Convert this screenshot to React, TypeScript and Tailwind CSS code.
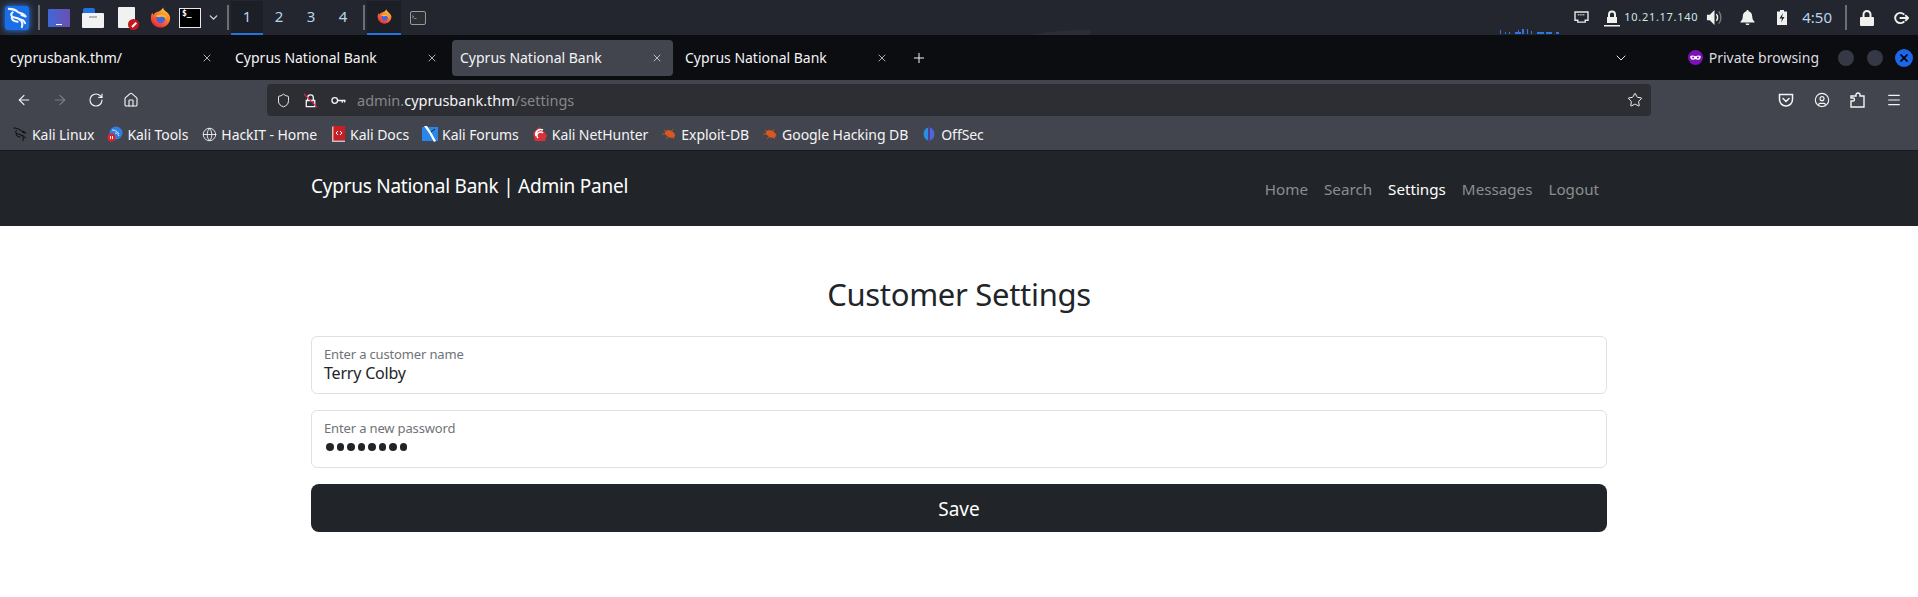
import React from 'react';
import { ArrowLeft, ArrowRight, RotateCw, Home, Shield, Star, X, Plus, ChevronDown, Menu, CircleUser, Globe } from 'lucide-react';

const font = "font-['Noto_Sans','Open_Sans',sans-serif]";

const KaliDragon = ({ className, color, weight = 1.5 }: { className?: string; color: string; weight?: number }) => (
  <svg viewBox="0 0 24 24" className={className} fill="none" stroke={color} strokeWidth={weight} strokeLinecap="round" strokeLinejoin="round">
    <path d="M3 3c4 0 7 1 9 3 2 1.500 4 1.500 6 2.500 1 .5 2 1.500 2.500 2.500-1.500-1-3-1-4.500-1.500" />
    <path d="M7 6.500c-1.500 1-2 2.500-1 4 1.500 2 6 1.500 8.500 3.500 2.500 2 3 5 2 8" />
    <path d="M6 12c0 3 3 4 6 4.500" />
    <path d="M14 14c2.500 0 5 1.500 6 4" />
  </svg>
);

const Firefox = ({ size }: { size: number }) => (
  <svg viewBox="0 0 24 24" width={size} height={size}>
    <defs>
      <linearGradient id="ffbody" x1="0.8" y1="0" x2="0.2" y2="1">
        <stop offset="0" stopColor="#ffd23a" />
        <stop offset="0.45" stopColor="#ff7a2e" />
        <stop offset="1" stopColor="#e0213f" />
      </linearGradient>
    </defs>
    <path d="M12 23.500C5.700 23.500 1 18.500 1 12.500c0-2.200.6-4.300 1.600-6l1.400 2.500c.8-1.600 2.300-2.800 4-3.300C10.500 5 13.500 3.500 15 .5c.3 2.500 2 3.500 4 5.300 2.300 2 4 4.200 4 6.700 0 6-4.800 11-11 11z" fill="url(#ffbody)" />
    <circle cx="12" cy="13.500" r="5.200" fill="#4463e4" />
    <path d="M6.500 10.500c2.500-2.500 7.500-3 10.500-.5 1.500 1.200 2 3 1.800 4.500-1-2.500-3-3.500-5.300-3.500-2.300.4-4.500 1.300-7-.5z" fill="#ffb52e" />
    <path d="M5 13c.5 4 3.500 7 7.500 7-3-1-5-3.500-5-7z" fill="#f8512f" />
  </svg>
);

const Divider = () => <div className="h-[25px] w-[2px] bg-[#6b6e75]" />;

const Workspace = ({ n, active }: { n: number; active?: boolean }) => (
  <div className={`flex h-[34px] w-[32px] items-center justify-center border-b-[2px] text-[15px] text-[#b8d4ee] ${active ? 'border-[#2473e0] bg-[#1c1f26] text-[#8fc3f2]' : 'border-transparent'}`}>
    {n}
  </div>
);

const TaskbarRight = () => (
  <div className="ml-auto flex items-center text-[#f0f0ee]">
    <svg viewBox="0 0 16 14" className="h-[13px] w-[15px]" fill="none" stroke="#e8e8e6" strokeWidth="1.500">
      <path d="M1 1h14v9h-3v2H4v-2H1z" />
      <path d="M4 4h8" strokeDasharray="1 1" />
    </svg>
    <svg viewBox="0 0 16 18" className="ml-[15px] h-[18px] w-[16px]" fill="#f0f0ee">
      <path d="M4 8V5.500a4 4 0 0 1 8 0V8h1v6H3V8zm2 0h4V5.500a2 2 0 0 0-4 0z" />
      <path d="M0 16h16v1.500H0z" />
    </svg>
    <span className="ml-[4px] text-[11px] tracking-[0.7px] text-[#d0e6e6]">10.21.17.140</span>
    <svg viewBox="0 0 18 18" className="ml-[8px] h-[17px] w-[17px]" fill="none">
      <path d="M1 6h3l5-5v16l-5-5H1z" fill="#f0f0ee" />
      <path d="M11 5.500c1.500 2 1.500 5 0 7" stroke="#f0f0ee" strokeWidth="1.500" />
      <path d="M13.500 2.500c3 3.500 3 9.500 0 13" stroke="#777a80" strokeWidth="1.500" />
    </svg>
    <svg viewBox="0 0 16 16" className="ml-[17px] h-[15px] w-[15px]" fill="#f0f0ee">
      <path d="M8 0c.7 0 1.200.5 1.200 1.200C11.500 1.800 13 3.800 13 6.500c0 3 .7 4.500 2.500 6v.8H.5v-.8C2.300 11 3 9.500 3 6.500 3 3.800 4.500 1.800 6.800 1.200 6.800.5 7.300 0 8 0z" />
      <path d="M6 14.300h4a2 2 0 0 1-4 0z" />
    </svg>
    <svg viewBox="0 0 10 15" className="ml-[22px] h-[15px] w-[10px]">
      <path d="M3 0h4v1.500h3V15H0V1.500h3z" fill="#f0f0ee" />
      <path d="M6 3L2.500 8.500H5L4 12.500 7.500 7H5z" fill="#23262e" />
    </svg>
    <span className="ml-[15px] text-[15px] text-[#b8d4ee]">4:50</span>
    <div className="ml-[13px]"><Divider /></div>
    <svg viewBox="0 0 14 16" className="ml-[13px] h-[16px] w-[14px]" fill="#f0f0ee">
      <path d="M2.500 7V4.500a4.500 4.500 0 0 1 9 0V7H13a1 1 0 0 1 1 1v7a1 1 0 0 1-1 1H1a1 1 0 0 1-1-1V8a1 1 0 0 1 1-1zm2 0h5V4.500a2.500 2.500 0 0 0-5 0z" />
    </svg>
    <svg viewBox="0 0 16 14" className="ml-[20px] h-[14px] w-[15px]" fill="none" stroke="#f0f0ee" strokeWidth="2">
      <path d="M11 3.500A5.500 5.500 0 1 0 11 10.500" />
      <path d="M6 7h9M12 4l3 3-3 3" />
    </svg>
  </div>
);

const Taskbar = () => (
  <div className="relative flex h-[35px] items-center bg-[#23262e] pl-[5px] pr-[9px]">
    <div className="flex h-[24px] w-[24px] items-center justify-center rounded-[3px] bg-[#1a6fe8] shadow-[0_0_6px_#2a80ff]">
      <KaliDragon className="h-[23px] w-[23px]" color="#f2f7ff" weight={2.1} />
    </div>
    <div className="ml-[9px]"><Divider /></div>
    <div className="ml-[8px] flex h-[18px] w-[22px] items-end justify-center rounded-[1px] bg-gradient-to-r from-[#3a68d8] to-[#6a4fb0] pb-[2px]">
      <div className="h-[1px] w-[6px] bg-white" />
    </div>
    <div className="relative ml-[12px] h-[20px] w-[22px]">
      <div className="absolute left-[1px] top-0 h-[7px] w-[12px] rounded-t-[2px] bg-[#2070e0]" />
      <div className="absolute bottom-0 left-0 flex h-[15px] w-[22px] justify-center rounded-[1px] bg-[#f2f2f2] pt-[3px]">
        <div className="h-[2px] w-[8px] bg-[#b5b5b5]" />
      </div>
    </div>
    <div className="relative ml-[14px] h-[21px] w-[17px] rounded-[1px] bg-[#f1f1f1]">
      <div className="absolute -bottom-[2px] -right-[4px] flex h-[11px] w-[11px] items-center justify-center rounded-full bg-[#c8161d]">
        <div className="h-[1.500px] w-[6px] -rotate-45 bg-white" />
      </div>
    </div>
    <div className="ml-[15px]"><Firefox size={21} /></div>
    <div className="ml-[8px] h-[20px] w-[22px] border border-[#e8e8e8] bg-black pl-[2px] font-['DejaVu_Sans_Mono',monospace] text-[8px] leading-[10px] font-bold text-white">$_</div>
    <ChevronDown className="ml-[6px] h-[13px] w-[13px] text-[#d8d8d8]" strokeWidth={2.5} />
    <div className="ml-[7px]"><Divider /></div>
    <div className="ml-[2px] flex">
      <Workspace n={1} active />
      <Workspace n={2} />
      <Workspace n={3} />
      <Workspace n={4} />
    </div>
    <div className="ml-[4px]"><Divider /></div>
    <div className="ml-[2px] flex h-[34px] w-[34px] items-center justify-center border-b-[2px] border-[#2473e0] bg-[#1c1f26]">
      <Firefox size={15} />
    </div>
    <div className="ml-[9px] h-[14px] w-[16px] rounded-[2px] border border-[#9a9a9a] bg-[#2b2e33] pl-[1px] text-[6px] leading-[8px] text-white">›_</div>
    <svg viewBox="0 0 60 5" className="absolute bottom-[1px] left-[1500px] h-[5px] w-[60px]" fill="#2a78e0">
      <path d="M0 1h1v4H0zM5 3h1v2H5zM9 3h1v2H9zM15 3h6v2h-6zM18 1h1v2h-1zM22 0h2v5h-2zM27 0h1v5h-1zM31 2h1v3h-1zM37 3h7v2h-7zM46 3h6v2h-6zM56 3h3v2h-3z" />
    </svg>
    <svg viewBox="0 0 60 5" className="absolute bottom-0 left-[1030px] h-[5px] w-[60px]">
      <path d="M0 5C20 1 40 0 60 0v5z" fill="#2b2e36" />
    </svg>
    <TaskbarRight />
  </div>
);

const Tab = ({ title, active }: { title: string; active?: boolean }) => (
  <div className={`mx-[2px] flex h-[36px] w-[221px] shrink-0 items-center justify-between rounded-[4px] pl-[8px] pr-[10px] text-[14px] text-[#f4f4f6] ${active ? 'bg-[#42454e]' : ''}`}>
    <span>{title}</span>
    <X className="h-[12px] w-[12px] text-[#e4e4e6]" strokeWidth={1.500} />
  </div>
);

const TabBar = () => (
  <div className="flex h-[45px] items-center bg-[#0c0d11] pr-[5px]">
    <Tab title="cyprusbank.thm/" />
    <Tab title="Cyprus National Bank" />
    <Tab title="Cyprus National Bank" active />
    <Tab title="Cyprus National Bank" />
    <Plus className="ml-[11px] h-[16px] w-[16px] text-[#f4f4f6]" strokeWidth={1.500} />
    <ChevronDown className="ml-auto h-[16px] w-[16px] text-[#e4e4e6]" strokeWidth={1.500} />
    <svg viewBox="0 0 16 16" className="ml-[59px] h-[15px] w-[15px]">
      <circle cx="8" cy="8" r="8" fill="#7a12b8" />
      <path d="M2.500 6.500c1.500-.8 3-.8 5.500.2 2.500-1 4-1 5.500-.2.3 2.500-.7 4-2.500 4-1.500 0-2-1-3-1s-1.500 1-3 1c-1.800 0-2.800-1.500-2.500-4z" fill="white" />
      <circle cx="5.500" cy="8" r="1.100" fill="#7a12b8" />
      <circle cx="10.500" cy="8" r="1.100" fill="#7a12b8" />
    </svg>
    <span className="ml-[6px] whitespace-nowrap text-[14px] text-[#dcdce0]">Private browsing</span>
    <div className="ml-[19px] h-[16px] w-[16px] rounded-full bg-[#353945]" />
    <div className="ml-[13px] h-[16px] w-[16px] rounded-full bg-[#353945]" />
    <div className="ml-[12px] flex h-[18px] w-[18px] items-center justify-center rounded-full bg-[#1e66e8]">
      <X className="h-[12px] w-[12px] text-black" strokeWidth={3.500} />
    </div>
  </div>
);

const Toolbar = () => (
  <div className="flex h-[40px] items-center bg-[#42454e] pl-[16px] pr-[16px] text-[#f4f4f6]">
    <ArrowLeft className="h-[16px] w-[16px]" strokeWidth={1.700} />
    <ArrowRight className="ml-[20px] h-[16px] w-[16px] text-[#7b7e85]" strokeWidth={1.700} />
    <RotateCw className="ml-[20px] h-[16px] w-[16px]" strokeWidth={1.700} />
    <Home className="ml-[19px] h-[16px] w-[16px]" strokeWidth={1.700} />
    <div className="ml-[128px] flex h-[32px] w-[1384px] shrink-0 items-center rounded-[4px] bg-[#2d2e33] pl-[9px] pr-[8px]">
      <Shield className="h-[15px] w-[15px]" strokeWidth={1.500} />
      <svg viewBox="0 0 16 16" className="ml-[12px] h-[15px] w-[15px]" fill="none" stroke="#f4f4f6" strokeWidth="1.400">
        <path d="M3.500 8h9v6.500h-9zM5 8V5a3 3 0 0 1 6 0v3" />
        <path d="M1 1l14 14" stroke="#e22850" strokeWidth="1.300" />
      </svg>
      <svg viewBox="0 0 16 16" className="ml-[13px] h-[15px] w-[15px]" fill="none" stroke="#f4f4f6" strokeWidth="1.400">
        <circle cx="4" cy="8" r="3" />
        <path d="M7 8h8.500M12 8v2.500M14.500 8v2" />
      </svg>
      <span className="ml-[11px] pt-[1px] text-[14.500px] text-[#85878b]">admin.<span className="text-[#f4f4f6]">cyprusbank.thm</span>/settings</span>
      <Star className="ml-auto h-[16px] w-[16px]" strokeWidth={1.500} />
    </div>
    <div className="ml-auto flex items-center gap-[20px]">
      <svg viewBox="0 0 16 16" className="h-[16px] w-[16px]" fill="none" stroke="#f4f4f6" strokeWidth="1.500" strokeLinecap="round">
        <path d="M1.500 2.500h13v5a6.500 6.500 0 0 1-13 0z" />
        <path d="M5 6.500l3 3 3-3" />
      </svg>
      <CircleUser className="h-[16px] w-[16px]" strokeWidth={1.700} />
      <svg viewBox="0 0 16 16" className="h-[16px] w-[16px]" fill="none" stroke="#f4f4f6" strokeWidth="1.400">
        <path d="M1 15V9h2a1.500 1.500 0 0 0 0-3H1V4h5V3a2 2 0 0 1 4 0v1h4v11z" />
      </svg>
      <Menu className="h-[16px] w-[16px]" strokeWidth={1.700} />
    </div>
  </div>
);

const Bookmark = ({ icon, label }: { icon: React.ReactNode; label: string }) => (
  <div className="flex items-center gap-[4px] text-[14px] tracking-[-0.06px] text-[#f4f4f6]">
    <div className="flex h-[16px] w-[16px] items-center justify-center">{icon}</div>
    <span>{label}</span>
  </div>
);

const Bug = () => (
  <svg viewBox="0 0 16 12" className="h-[12px] w-[16px]" fill="#d9581f" stroke="#d9581f" strokeWidth="0.8">
    <ellipse cx="9" cy="6" rx="5" ry="3" transform="rotate(25 9 6)" />
    <path d="M1 6h5M3 2l4 3M12 1l-2 3M5 11l3-3M13 11l-2-3" fill="none" />
  </svg>
);

const Bookmarks = () => (
  <div className="flex h-[31px] items-center gap-[13px] border-b border-[#17181c] bg-[#42454e] pb-[2px] pl-[12px]">
    <Bookmark icon={<KaliDragon className="h-[16px] w-[16px]" color="#0b0b0b" />} label="Kali Linux" />
    <Bookmark
      icon={
        <svg viewBox="0 0 16 16" className="h-[16px] w-[16px]">
          <circle cx="9" cy="7" r="6.500" fill="#2f7ee0" />
          <path d="M5 4c3 0 5 1 7 4M8 7c2 0 3 1 4 3" stroke="#dce8fa" strokeWidth="1" fill="none" />
          <circle cx="4.500" cy="11.500" r="4" fill="#d8252b" />
          <path d="M3.500 10v3M5.500 10v3" stroke="white" strokeWidth="1" />
        </svg>
      }
      label="Kali Tools"
    />
    <Bookmark icon={<Globe className="h-[15px] w-[15px]" strokeWidth={1.400} />} label="HackIT - Home" />
    <Bookmark
      icon={
        <svg viewBox="0 0 13 16" className="h-[16px] w-[13px]">
          <path d="M1 0h12v14H1z" fill="#c71f25" />
          <path d="M0 1v15h13v-1.500H1.500V0z" fill="#e8b4b0" />
          <path d="M6 5L4 7l2 2M8 5l2 2-2 2" stroke="white" strokeWidth="1" fill="none" />
        </svg>
      }
      label="Kali Docs"
    />
    <Bookmark
      icon={
        <svg viewBox="0 0 16 16" className="h-[16px] w-[16px]">
          <path d="M0 1h16v14H0z" fill="#2a86e8" />
          <path d="M2 0l5 7 5 9 2-1-5-9-4-6z" fill="white" />
          <path d="M9 6l4-3" stroke="#1a1a1a" strokeWidth="1" />
        </svg>
      }
      label="Kali Forums"
    />
    <Bookmark
      icon={
        <svg viewBox="0 0 16 16" className="h-[16px] w-[16px]" fill="none">
          <path d="M1 7L7 1l8 8-2 6H3z" fill="#d9303a" />
          <path d="M4 10a5 5 0 0 1 7-6M6 12a3 3 0 0 1 5-5" stroke="white" strokeWidth="1.500" />
        </svg>
      }
      label="Kali NetHunter"
    />
    <Bookmark icon={<Bug />} label="Exploit-DB" />
    <Bookmark icon={<Bug />} label="Google Hacking DB" />
    <Bookmark
      icon={
        <svg viewBox="0 0 16 16" className="h-[16px] w-[16px]">
          <path d="M7 1.500A7 7 0 0 0 7 14.500z" fill="#2a8fe0" />
          <path d="M9 1.500a7 7 0 0 1 0 13z" fill="#4a68d8" />
          <path d="M7.500 0h1v16h-1z" fill="#5a3fc8" />
        </svg>
      }
      label="OffSec"
    />
  </div>
);

const Field = ({ label, children }: { label: string; children: React.ReactNode }) => (
  <div className="h-[58px] rounded-[6px] border border-[#dee2e6] px-[12px] pt-[9px]">
    <div className="text-[13px] leading-[16px] tracking-[-0.15px] text-[#6f7377]">{label}</div>
    <div className="text-[16px] leading-[22px] tracking-[-0.2px] text-[#212529]">{children}</div>
  </div>
);

export default function App() {
  return (
    <div className={`h-[597px] w-[1918px] overflow-hidden bg-white ${font}`}>
      <Taskbar />
      <TabBar />
      <Toolbar />
      <Bookmarks />
      <nav className="h-[75px] bg-[#212529]">
        <div className="mx-auto flex w-[1296px] items-start justify-between pr-[8px]">
          <span className="mt-[21px] text-[19px] leading-[28px] tracking-[-0.25px] text-white">Cyprus National Bank | Admin Panel</span>
          <div className="mt-[26px] flex gap-[16px] text-[15.200px] leading-[24px] text-[#8b8d90]">
            <span>Home</span>
            <span>Search</span>
            <span className="text-white">Settings</span>
            <span>Messages</span>
            <span>Logout</span>
          </div>
        </div>
      </nav>
      <main className="mx-auto w-[1296px] pt-[47px] text-[#212529]">
        <h1 className="mb-[21px] text-center text-[31px] leading-[42px] tracking-[-0.3px]">Customer Settings</h1>
        <div className="flex flex-col gap-[16px]">
          <Field label="Enter a customer name">Terry Colby</Field>
          <Field label="Enter a new password">
            <div className="flex h-[22px] items-center gap-[3px] pl-[2px]">
              {[0, 1, 2, 3, 4, 5, 6, 7].map((i) => (
                <div key={i} className="h-[7.500px] w-[7.500px] rounded-full bg-[#212529]" />
              ))}
            </div>
          </Field>
          <button className="h-[48px] rounded-[8px] bg-[#212529] pt-[2px] text-[19px] text-white">Save</button>
        </div>
      </main>
    </div>
  );
}
